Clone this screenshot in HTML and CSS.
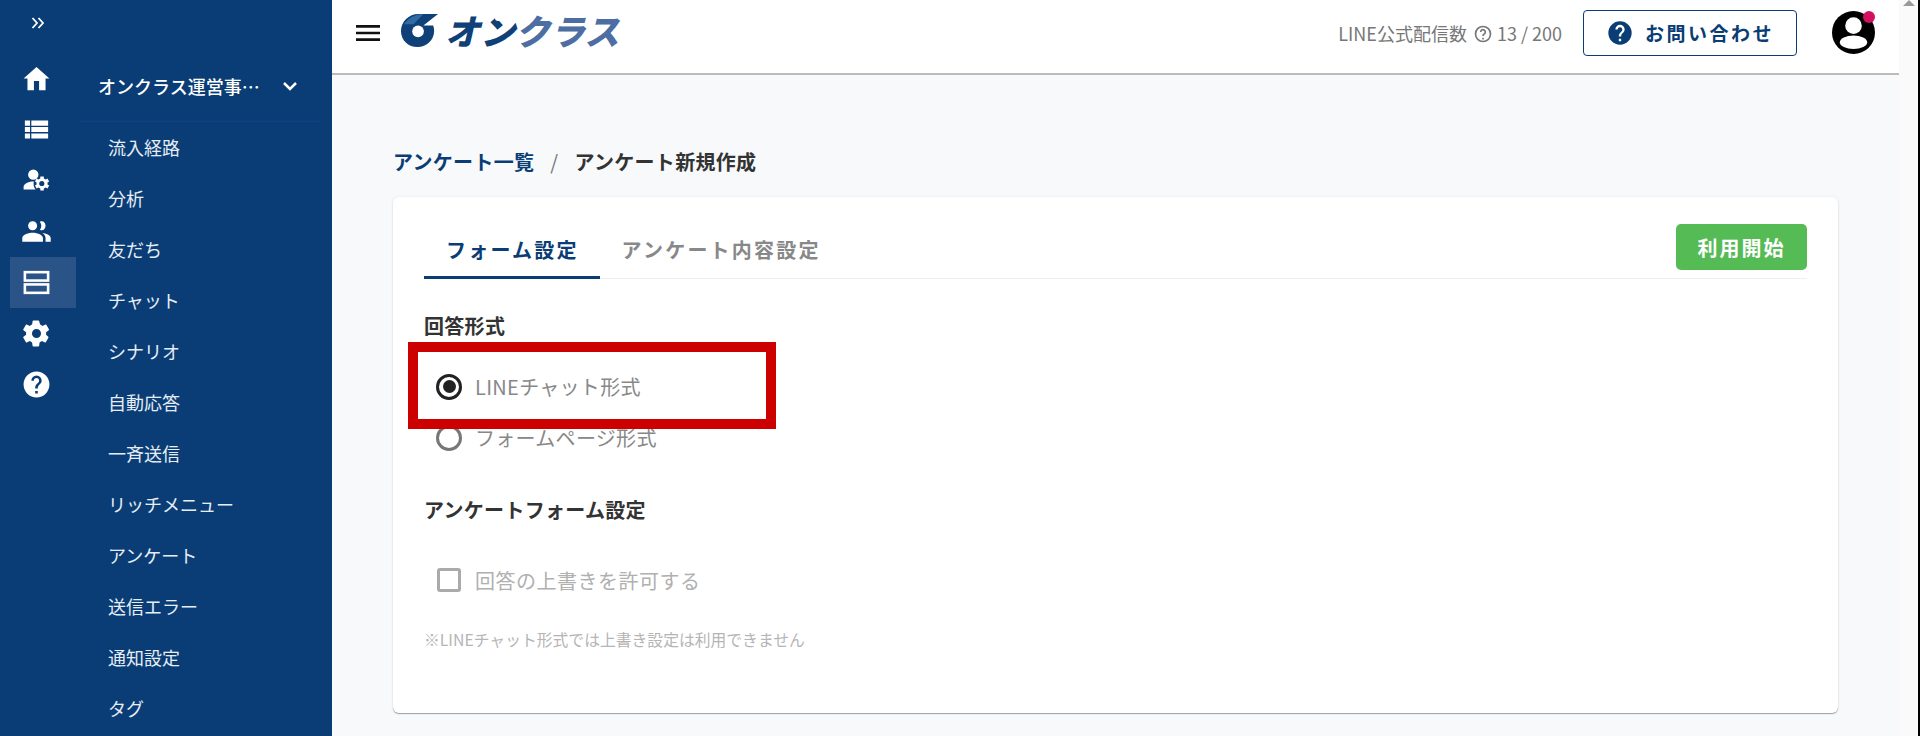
FILE: index.html
```html
<!DOCTYPE html>
<html lang="ja">
<head>
  <meta charset="UTF-8" />
  <meta name="viewport" content="width=device-width, initial-scale=1.0"/>
  <title>アンケート新規作成 - オンクラス</title>
  <link rel="stylesheet" href="styles.css">
</head>
<body>

  <!-- Icon rail -->
  <aside class="rail">
    <div class="rail-toggle">
      <svg viewBox="0 0 14 12" width="14" height="12"><path d="M1.500 1l4.500 5-4.500 5M7.500 1l4.500 5-4.500 5"/></svg>
    </div>
    <a class="rail-item">
      <svg viewBox="0 0 24 24" width="31" height="31"><path d="M10 21v-7h4v7h5v-9h3L12 3 2 12h3v9z"/></svg>
    </a>
    <a class="rail-item">
      <svg viewBox="0 0 24 24" width="31" height="31"><path d="M3 5h4v4H3zM8 5h13v4H8zM3 10h4v4H3zM8 10h13v4H8zM3 15h4v4H3zM8 15h13v4H8z"/></svg>
    </a>
    <a class="rail-item">
      <svg viewBox="0 0 24 24" width="31" height="31"><circle cx="9.500" cy="7.500" r="4"/><path d="M2 19v-2c0-2.800 4-4.300 8-4.300-.6 2.100-.2 4.500 1.300 6.300z"/><path d="M21.800 15.900l-1.300-.8c.1-.6.100-1 0-1.600l1.300-.8-1.300-2.200-1.400.7c-.4-.4-.9-.6-1.400-.8l-.1-1.500h-2.600l-.1 1.500c-.5.200-1 .4-1.400.8l-1.400-.7-1.300 2.200 1.300.8c-.1.600-.1 1 0 1.600l-1.300.8 1.300 2.200 1.400-.7c.4.400.9.600 1.400.8l.1 1.500h2.600l.1-1.500c.5-.2 1-.4 1.400-.8l1.400.7zM16.100 16.300a2 2 0 1 1 0-4 2 2 0 0 1 0 4z"/></svg>
    </a>
    <a class="rail-item">
      <svg viewBox="0 0 24 24" width="31" height="31"><path d="M16 11c1.700 0 3-1.400 3-3.500S17.700 4 16 4c-.5 0-1 .1-1.400.4.700 1 1.100 2 1.100 3.100s-.4 2.300-1.100 3.100c.4.300.9.400 1.400.4zM9 11c2 0 3.500-1.600 3.500-3.500S11 4 9 4 5.500 5.600 5.500 7.500 7 11 9 11zM9 13c-2.700 0-8 1.300-8 4v3h16v-3c0-2.700-5.300-4-8-4zm7.500.1c1.500 1 2.500 2.300 2.500 3.900v3h4v-3c0-2.400-3.800-3.700-6.500-3.900z"/></svg>
    </a>
    <a class="rail-item active">
      <svg viewBox="0 0 24 24" width="31" height="31" class="outline"><rect x="3" y="4" width="18" height="6.500"/><rect x="3" y="13.500" width="18" height="6.500"/></svg>
    </a>
    <a class="rail-item">
      <svg viewBox="0 0 24 24" width="31" height="31"><path d="M19.400 13c.1-.3.100-.7.100-1s0-.7-.1-1l2.100-1.600c.2-.2.200-.4.100-.6l-2-3.500c-.1-.2-.4-.3-.6-.2l-2.500 1c-.5-.4-1.100-.7-1.700-1L14 2.400c0-.2-.2-.4-.5-.4h-4c-.2 0-.4.200-.5.400l-.4 2.700c-.6.200-1.200.6-1.700 1l-2.500-1c-.2-.1-.5 0-.6.200l-2 3.500c-.1.200-.1.400.1.600L4 11c0 .3-.1.700-.1 1s0 .7.100 1l-2.100 1.600c-.2.200-.2.400-.1.600l2 3.500c.1.200.4.300.6.200l2.500-1c.5.400 1.100.7 1.700 1l.4 2.700c0 .2.300.4.500.4h4c.2 0 .5-.2.500-.4l.4-2.700c.6-.2 1.200-.6 1.700-1l2.500 1c.2.100.5 0 .6-.2l2-3.500c.1-.2.100-.4-.1-.6zM12 15.500a3.500 3.500 0 1 1 0-7 3.500 3.500 0 0 1 0 7z"/></svg>
    </a>
    <a class="rail-item">
      <svg viewBox="0 0 24 24" width="31" height="31"><path d="M12 2a10 10 0 1 0 0 20 10 10 0 0 0 0-20zm1 17h-2v-2h2zm2.100-7.700l-.9.900c-.7.700-1.200 1.300-1.200 2.800h-2v-.5c0-1.100.5-2.100 1.200-2.800l1.200-1.300c.4-.3.600-.8.600-1.400a2 2 0 0 0-4 0H8a4 4 0 0 1 8 0c0 .9-.4 1.700-.9 2.300z"/></svg>
    </a>
  </aside>

  <!-- Sub menu -->
  <nav class="submenu">
    <div class="org">
      <span class="org-name">オンクラス運営事…</span>
      <svg viewBox="0 0 24 24" width="24" height="24" class="org-arrow"><path d="M6 9l6 6 6-6"/></svg>
    </div>
    <a>流入経路</a>
    <a>分析</a>
    <a>友だち</a>
    <a>チャット</a>
    <a>シナリオ</a>
    <a>自動応答</a>
    <a>一斉送信</a>
    <a>リッチメニュー</a>
    <a>アンケート</a>
    <a>送信エラー</a>
    <a>通知設定</a>
    <a>タグ</a>
  </nav>

  <div class="main">
    <!-- Header -->
    <header>
      <svg viewBox="0 0 24 24" width="32" height="32" class="burger"><path d="M3 6h18v2H3zM3 11h18v2H3zM3 16h18v2H3z"/></svg>
      <div class="logo">
        <svg viewBox="0 0 40 36" width="39" height="36">
          <path d="M19 1.500C9 1.500 1 9.500 1 19s7.500 16.500 17 16.500S35 28 35 19c0-2-.4-4-1-5.500H24L39 1.500z" fill="#0f4077"/>
          <path d="M4 12C8 6 15 2 24 1.500L14 12z" fill="#2f6aa5"/>
          <circle cx="18.500" cy="19.500" r="6" fill="#fff"/>
        </svg>
        <span class="logo-text"><span class="logo-dark">オン</span><span class="logo-light">クラス</span><span class="logo-dot"></span></span>
      </div>
      <div class="header-right">
        <span class="delivery">LINE公式配信数</span>
        <svg viewBox="0 0 24 24" width="20" height="20" class="help"><circle cx="12" cy="12" r="9"/><path d="M9.200 9.600a2.800 2.800 0 1 1 4.500 2.200c-1 .8-1.700 1.300-1.700 2.700"/><path d="M12 16.500v2"/></svg>
        <span class="delivery">13 / 200</span>
        <button class="btn-contact">
          <svg viewBox="0 0 24 24" width="28" height="28"><path d="M12 2a10 10 0 1 0 0 20 10 10 0 0 0 0-20zm1 17h-2v-2h2zm2.100-7.700l-.9.900c-.7.700-1.200 1.300-1.200 2.800h-2v-.5c0-1.100.5-2.100 1.200-2.800l1.200-1.300c.4-.3.600-.8.600-1.400a2 2 0 0 0-4 0H8a4 4 0 0 1 8 0c0 .9-.4 1.700-.9 2.300z"/></svg>
          お問い合わせ
        </button>
        <div class="avatar">
          <svg viewBox="0 0 44 44" width="43" height="43">
            <circle cx="22" cy="22" r="22"/>
            <circle cx="22" cy="15" r="8.500" fill="#fff"/>
            <ellipse cx="22" cy="32" rx="14" ry="7" fill="#fff"/>
          </svg>
          <span class="badge"></span>
        </div>
      </div>
    </header>

    <!-- Main Content -->
    <main class="content">
      <div class="breadcrumb">
        <a>アンケート一覧</a>
        <span class="sep">/</span>
        <span>アンケート新規作成</span>
      </div>

      <section class="card">
        <div class="tabs">
          <span class="tab active">フォーム設定</span>
          <span class="tab">アンケート内容設定</span>
          <button class="btn-start">利用開始</button>
        </div>

        <h3 class="group-title">回答形式</h3>
        <div class="radio-list">
          <label class="radio-row highlight">
            <span class="radio checked"></span>
            LINEチャット形式
          </label>
          <label class="radio-row">
            <span class="radio"></span>
            フォームページ形式
          </label>
        </div>

        <h3 class="group-title">アンケートフォーム設定</h3>
        <label class="check-row">
          <span class="check"></span>
          回答の上書きを許可する
        </label>
        <p class="note">※LINEチャット形式では上書き設定は利用できません</p>
      </section>
    </main>
  </div>

  <div class="scrollbar"><span class="scroll-up"></span></div>

</body>
</html>
```

FILE: styles.css
```css
* {
  box-sizing: border-box;
}
body {
  font-family: "Noto Sans CJK JP", "Noto Sans", sans-serif;
  background-color: #fff;
  margin: 0;
  height: 736px;
  overflow: hidden;
  display: flex;
  color: #333;
}

/* icon rail */
.rail {
  width: 76px;
  flex-shrink: 0;
  height: 736px;
  background-color: #0a3d75;
  display: flex;
  flex-direction: column;
  align-items: flex-end;
}
.rail-toggle {
  width: 76px;
  height: 53px;
  padding: 17px 0 0 31px;
}
.rail-toggle svg {
  display: block;
  fill: none;
  stroke: white;
  stroke-width: 1.800;
}
.rail-item {
  width: 66px;
  height: 51px;
  padding-right: 14px;
  display: flex;
  align-items: center;
  justify-content: center;
}
.rail-item svg {
  fill: white;
}
.rail-item svg.outline {
  fill: none;
  stroke: white;
  stroke-width: 2;
}
.rail-item.active {
  background-color: #2a5488;
}

/* sub menu */
.submenu {
  width: 256px;
  flex-shrink: 0;
  height: 736px;
  background-color: #0a3d75;
  padding-left: 4px;
  overflow: hidden;
}
.org {
  height: 122px;
  margin-right: 12px;
  padding: 66px 0 0 18px;
  display: flex;
  align-items: flex-start;
  border-bottom: 1px solid #0f4280;
  color: white;
  font-size: 18px;
  font-weight: 500;
}
.org-name {
  line-height: 40px;
  width: 180px;
}
.org-arrow {
  margin-top: 8px;
  fill: none;
  stroke: white;
  stroke-width: 2.500;
}
.submenu a {
  display: block;
  height: 51px;
  padding-left: 28px;
  padding-top: 13px;
  color: #e6edf5;
  font-size: 18px;
  line-height: 24px;
}

/* header */
.main {
  width: 1567px;
  flex-shrink: 0;
  height: 736px;
  background-color: #f8f9fb;
}
header {
  height: 75px;
  background-color: white;
  border-bottom: 2px solid #bbb;
  display: flex;
  align-items: center;
  padding: 0 24px 8px 20px;
}
.burger {
  fill: #111;
  margin-right: 16px;
}
.logo {
  display: flex;
  align-items: center;
  gap: 6px;
  margin-top: -5px;
}
.logo-text {
  position: relative;
  font-size: 35px;
  font-weight: 900;
  font-style: italic;
  line-height: 36px;
}
.logo-dark {
  color: #0f4077;
}
.logo-light {
  color: #4d6ea3;
}
.logo-dot {
  position: absolute;
  left: 50px;
  top: 3px;
  width: 6px;
  height: 6px;
  border-radius: 50%;
  background-color: white;
}
.header-right {
  margin-left: auto;
  display: flex;
  align-items: center;
}
.delivery {
  color: #777;
  font-size: 18px;
}
.help {
  margin: 2px 4px 0 6px;
  fill: none;
  stroke: #777;
  stroke-width: 2;
}
.btn-contact {
  width: 214px;
  height: 46px;
  margin-left: 21px;
  background-color: white;
  border: 1px solid #0a3d75;
  border-radius: 4px;
  color: #0a3d75;
  font-family: inherit;
  font-size: 19px;
  font-weight: 700;
  letter-spacing: 2.500px;
  display: flex;
  align-items: center;
  justify-content: center;
  gap: 11px;
}
.btn-contact svg {
  fill: #0a3d75;
}
.avatar {
  position: relative;
  width: 43px;
  height: 43px;
  margin-left: 35px;
}
.avatar svg {
  display: block;
}
.badge {
  position: absolute;
  top: 0;
  right: 0;
  width: 12px;
  height: 12px;
  border-radius: 50%;
  background-color: #d1115f;
}

/* content */
.content {
  padding: 75px 61px 0;
}
.breadcrumb {
  height: 24px;
  font-size: 20px;
  font-weight: 700;
  line-height: 24px;
  letter-spacing: 0.300px;
  display: flex;
  gap: 16px;
}
.breadcrumb a {
  color: #0a3d75;
}
.breadcrumb .sep {
  color: #777;
  font-weight: 400;
}
.card {
  margin-top: 23px;
  height: 516px;
  padding: 31px 31px 0;
  background-color: white;
  border-radius: 6px;
  box-shadow: 0 1px 1px rgba(0,0,0,0.35), 0 0 4px rgba(0,0,0,0.06);
}
.tabs {
  height: 51px;
  display: flex;
  align-items: flex-start;
  border-bottom: 1px solid #eee;
}
.tab {
  height: 51px;
  padding: 8px 21px 0 22px;
  font-size: 20px;
  font-weight: 700;
  line-height: 27px;
  letter-spacing: 2.200px;
  color: #888;
}
.tab.active {
  color: #0a3d75;
  border-bottom: 3px solid #0a3d75;
}
.btn-start {
  margin-left: auto;
  margin-top: -4px;
  width: 131px;
  height: 46px;
  border: none;
  border-radius: 5px;
  background-color: #55bb55;
  color: white;
  font-family: inherit;
  font-size: 20px;
  font-weight: 700;
  letter-spacing: 2px;
}
.group-title {
  margin: 33px 0 0;
  font-size: 20px;
  font-weight: 700;
  line-height: 28px;
  letter-spacing: 0.300px;
  color: #333;
}
.radio-list {
  margin-top: 21px;
  position: relative;
}
.radio-row {
  display: flex;
  align-items: center;
  height: 51px;
  padding-left: 12px;
  font-size: 20px;
  letter-spacing: 0.300px;
  color: #888;
}
.radio-row.highlight::after {
  content: "";
  box-sizing: border-box;
  position: absolute;
  left: -16px;
  top: -19px;
  width: 368px;
  height: 87px;
  border: 10px solid #cc0000;
}
.radio {
  width: 26px;
  height: 26px;
  margin-right: 13px;
  border: 3px solid #777;
  border-radius: 50%;
  display: flex;
  align-items: center;
  justify-content: center;
}
.radio.checked {
  border-color: #222;
}
.radio.checked::before {
  content: "";
  width: 13px;
  height: 13px;
  border-radius: 50%;
  background-color: #222;
}
.check-row {
  display: flex;
  align-items: center;
  height: 30px;
  margin-top: 41px;
  padding-left: 13px;
  font-size: 20px;
  letter-spacing: 0.500px;
  color: #b0b0b0;
}
.check {
  width: 24px;
  height: 24px;
  margin-right: 14px;
  border: 3px solid #aaa;
  border-radius: 3px;
}
.note {
  margin: 35px 0 0;
  font-size: 15.800px;
  line-height: 20px;
  color: #b5b5b5;
}

/* scrollbar */
.scrollbar {
  width: 21px;
  flex-shrink: 0;
  height: 736px;
  background-color: #fafafb;
  border-right: 2px solid #000;
  position: relative;
}
.scroll-up {
  position: absolute;
  top: 0;
  left: 4px;
  border-left: 6px solid transparent;
  border-right: 6px solid transparent;
  border-bottom: 6px solid #999;
}
```
